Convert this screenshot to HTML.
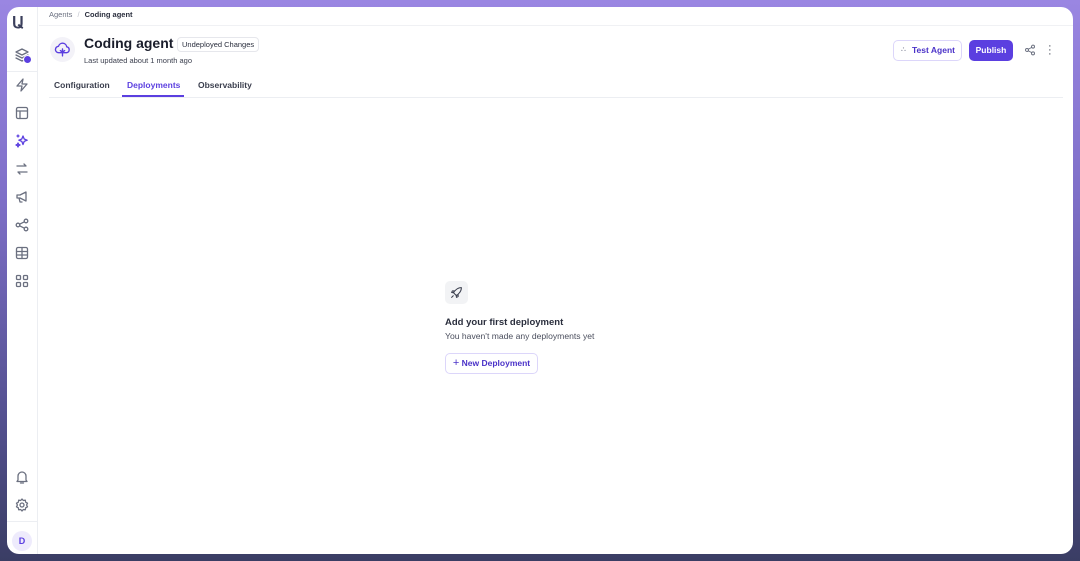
<!DOCTYPE html>
<html><head><style>
*{box-sizing:border-box;margin:0;padding:0}
body{width:1080px;height:561px;overflow:hidden;font-family:"Liberation Sans",sans-serif;background:linear-gradient(180deg,#9a86e2 0%,#7e6fc8 35%,#53508f 75%,#3a3d64 100%);position:relative}
.panel{position:absolute;left:7px;top:7px;width:1066px;height:547px;background:#fff;border-radius:12px;overflow:hidden}
.side{position:absolute;left:0;top:0;width:31px;height:100%;border-right:1px solid #eceef2}
.ic{position:absolute;left:7px;width:16px;height:16px}
svg{stroke:#6b7080;fill:none;stroke-width:1.3;stroke-linecap:round;stroke-linejoin:round}
.t{position:absolute;white-space:nowrap}
</style></head><body>
<div class="panel">
<div class="side">
<div class="t" style="left:5px;top:6px;font-size:16px;color:#3b3f5c;font-weight:bold">Ա</div>
<svg class="ic" style="top:40px" viewBox="0 0 16 16"><path d="M8 2 2 5l6 3 6-3z M2 8l6 3 6-3 M2 11l6 3 6-3"/></svg>
<div style="position:absolute;left:16px;top:48px;width:9px;height:9px;border-radius:50%;background:#5b3fe0;border:1px solid #fff"></div>
<div style="position:absolute;left:0;top:64px;width:31px;border-top:1px solid #eceef2"></div>
<svg class="ic" style="top:70px" viewBox="0 0 16 16"><path d="M9 2 3 9h5l-1 5 6-7H8z"/></svg>
<svg class="ic" style="top:98px" viewBox="0 0 16 16"><rect x="2.5" y="2.5" width="11" height="11" rx="1.5"/><path d="M2.5 6h11 M6 6v7.5"/></svg>
<svg class="ic" style="top:126px;stroke:#5b3fe0" viewBox="0 0 16 16"><path d="M9 3l1.2 3 3 1.2-3 1.2L9 11.5 7.8 8.4l-3-1.2 3-1.2z M4 10l.6 1.4L6 12l-1.4.6L4 14l-.6-1.4L2 12l1.4-.6z M4 2v2 M3 3h2"/></svg>
<svg class="ic" style="top:154px" viewBox="0 0 16 16"><path d="M3 5h9l-2-2 M13 11H4l2 2"/></svg>
<svg class="ic" style="top:182px" viewBox="0 0 16 16"><path d="M3 6h3l6-3v9L6 9H3z M5 9l1 4h2"/></svg>
<svg class="ic" style="top:210px" viewBox="0 0 16 16"><circle cx="4" cy="8" r="1.8"/><circle cx="12" cy="4" r="1.8"/><circle cx="12" cy="12" r="1.8"/><path d="M5.6 7.2l4.8-2.4 M5.6 8.8l4.8 2.4"/></svg>
<svg class="ic" style="top:238px" viewBox="0 0 16 16"><rect x="2.5" y="2.5" width="11" height="11" rx="1.5"/><path d="M2.5 6.5h11 M2.5 10h11 M8 2.5v11"/></svg>
<svg class="ic" style="top:266px" viewBox="0 0 16 16"><rect x="2.5" y="2.5" width="4" height="4" rx="1"/><rect x="9.5" y="2.5" width="4" height="4" rx="1"/><rect x="2.5" y="9.5" width="4" height="4" rx="1"/><rect x="9.5" y="9.5" width="4" height="4" rx="1"/></svg>
<svg class="ic" style="top:462px" viewBox="0 0 16 16"><path d="M4 11V7a4 4 0 0 1 8 0v4l1 1.5H3z M6.5 14h3"/></svg>
<svg class="ic" style="top:490px" viewBox="0 0 16 16"><circle cx="8" cy="8" r="2"/><path d="M8 2l1.3 1.5 2-.3.4 2 1.8 1-.9 1.8.9 1.8-1.8 1-.4 2-2-.3L8 14l-1.3-1.5-2 .3-.4-2-1.8-1L3.4 8l-.9-1.8 1.8-1 .4-2 2 .3z"/></svg>
<div style="position:absolute;left:0;top:514px;width:31px;border-top:1px solid #eceef2"></div>
<div style="position:absolute;left:5px;top:524px;width:20px;height:20px;border-radius:50%;background:#eeebfc;color:#5b3fe0;font-size:9px;font-weight:bold;text-align:center;line-height:20px">D</div>
</div>
<div class="t" style="left:42px;top:3px;font-size:7.5px;color:#6b7080">Agents <span style="color:#c0c3cc;margin:0 3px">/</span> <span style="color:#2a2e3d;font-weight:bold">Coding agent</span></div>
<div style="position:absolute;left:32px;top:18px;right:0;border-top:1px solid #f0f1f4"></div>
<div style="position:absolute;left:43px;top:30px;width:25px;height:25px;border-radius:50%;background:#f3f2f8"></div>
<svg style="position:absolute;left:47px;top:34px;stroke:#5b3fe0" width="17" height="17" viewBox="0 0 16 16"><path d="M4.5 11a3 3 0 0 1-.3-6A4 4 0 0 1 12 5.5a2.8 2.8 0 0 1 0 5.5z M8 7.5V14 M6 9l2 1.5L10 9"/></svg>
<div class="t" style="left:77px;top:28px;font-size:14px;font-weight:bold;color:#1a1d2b">Coding agent</div>
<div class="t" style="left:170px;top:30px;height:15px;padding:0 4px;border:1px solid #e6e7ec;border-radius:4px;font-size:7.5px;line-height:13px;color:#2a2e3d">Undeployed Changes</div>
<div class="t" style="left:77px;top:49px;font-size:7.5px;color:#3a3e4d">Last updated about 1 month ago</div>
<div class="t" style="left:47px;top:73px;font-size:8.5px;color:#3a3e4d;font-weight:bold">Configuration</div>
<div class="t" style="left:120px;top:73px;font-size:8.5px;color:#5b3fe0;font-weight:bold">Deployments</div>
<div class="t" style="left:191px;top:73px;font-size:8.5px;color:#3a3e4d;font-weight:bold">Observability</div>
<div style="position:absolute;left:115px;top:88px;width:62px;height:2px;background:#5b3fe0"></div>
<div style="position:absolute;left:42px;top:90px;width:1014px;border-top:1px solid #eceef2"></div>
<div class="t" style="left:886px;top:33px;width:69px;height:21px;border:1px solid #dcd6fa;border-radius:5px;font-size:8.5px;font-weight:bold;color:#4a32c8;line-height:19px;padding-left:18px">Test Agent</div>
<div class="t" style="left:894px;top:39px;font-size:7px;color:#8a8fa0">⛬</div>
<div class="t" style="left:962px;top:33px;width:44px;height:21px;background:#5b3fe0;border-radius:5px;font-size:8.5px;font-weight:bold;color:#fff;line-height:21px;text-align:center">Publish</div>
<svg style="position:absolute;left:1017px;top:37px" width="12" height="12" viewBox="0 0 16 16"><circle cx="4" cy="8" r="2"/><circle cx="12" cy="3.5" r="2"/><circle cx="12" cy="12.5" r="2"/><path d="M5.7 7l4.6-2.5 M5.7 9l4.6 2.5"/></svg>
<div class="t" style="left:1041px;top:37px;width:2px;font-size:11px;color:#3a3e4d;line-height:4px">·<br>·<br>·</div>
<div style="position:absolute;left:438px;top:274px;width:23px;height:23px;border-radius:5px;background:#f2f3f5"></div>
<svg style="position:absolute;left:443px;top:279px;stroke:#3a3e4d" width="13" height="13" viewBox="0 0 16 16"><path d="M6 10l-2-2 3-3c2-2 5-3 7-3 0 2-1 5-3 7l-3 3z M6 6H3l-1 2 3 .5 M10 10v3l-2 1-.5-3 M4 12l-2 2"/></svg>
<div class="t" style="left:438px;top:310px;font-size:9.5px;font-weight:bold;color:#2a2e3d">Add your first deployment</div>
<div class="t" style="left:438px;top:324px;font-size:8.6px;color:#4a4e5d">You haven't made any deployments yet</div>
<div class="t" style="left:438px;top:346px;width:93px;height:21px;border:1px solid #dcd6fa;border-radius:5px;font-size:8.5px;font-weight:bold;color:#4a32c8;line-height:19px;text-align:center"><span style="font-weight:normal;font-size:11px">+</span> New Deployment</div>
</div>
</body></html>
